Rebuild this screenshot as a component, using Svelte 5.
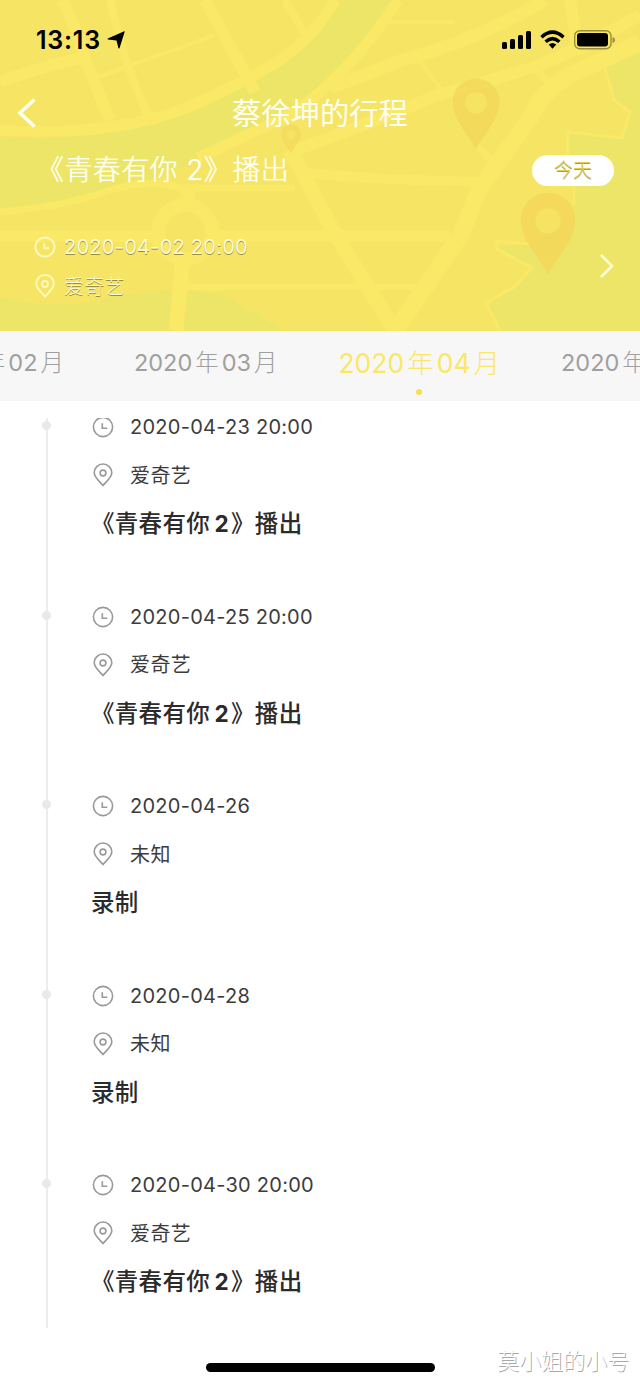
<script>
  const months = [['2020', '02'], ['2020', '03'], ['2020', '04'], ['2020', '05']];
  const episode = ['《青春有你 ', '2', '》播出'];
  const events = [
    { time: '2020-04-23 20:00', place: '爱奇艺', title: episode },
    { time: '2020-04-25 20:00', place: '爱奇艺', title: episode },
    { time: '2020-04-26', place: '未知', title: ['录制'] },
    { time: '2020-04-28', place: '未知', title: ['录制'] },
    { time: '2020-04-30 20:00', place: '爱奇艺', title: episode }
  ];
</script>

{#snippet clock()}
  <svg class="icon" viewBox="0 0 24 24"><circle cx="12" cy="12" r="9.6" /><path d="M11.3 8.2v5h5" /></svg>
{/snippet}
{#snippet pin()}
  <svg class="icon" viewBox="0 0 24 24"><path d="M12 22.500C9 19 3.200 14.500 3.200 9.800a8.800 8.800 0 0 1 17.600 0C20.800 14.500 15 19 12 22.500Z" /><circle cx="12" cy="10" r="2.900" /></svg>
{/snippet}
{#snippet marker(x, y, s, o)}
  <g transform="translate({x} {y}) scale({s})" opacity={o}>
    <path fill="#f4d85a" d="M0 57C-5 43-28 22-28 0a28 28 0 0 1 56 0C28 22 5 43 0 57Z" />
    <circle cy="1" r="13" fill="#f6e361" />
  </g>
{/snippet}

<div class="screen">
  <header>
    <svg class="map" viewBox="0 0 640 331">
      <g fill="#ece568">
        <path d="M0 137Q130 143 208 105C270 78 312 48 340 0H394C370 40 335 84 290 110C220 145 190 172 130 184Q60 205 0 208Z" />
        <path d="M0 297Q50 310 100 300Q205 278 240 305L285 331H0Z" />
        <path d="M640 44L604 65L614 100L630 112L622 138L568 132L570 160L574 220L530 243L498 247L532 268L510 290L486 305L500 331H640Z" />
      </g>
      <g class="roads">
        <path d="M0 130Q130 138 208 98C270 70 308 48 335 0" stroke-width="11" />
        <path d="M0 212Q60 207 105 192T180 188H295" stroke-width="7" />
        <path d="M198 158L290 115Q350 75 398 0" stroke-width="11" />
        <path d="M0 82Q40 67 85 57" stroke-width="12" />
        <path d="M98 77L215 35M388 22H455M415 55L447 97" stroke-width="4" />
        <path d="M62 0Q78 30 85 60L110 120M205 0L255 92" stroke-width="12" />
        <path d="M110 0Q123 62 150 120M285 0L305 35" stroke-width="8" />
        <path d="M330 88L400 61Q480 39 545 0" stroke-width="13" />
        <path d="M290 152Q380 120 435 96L535 67L590 43L640 15M570 0L578 55" stroke-width="12" />
        <path d="M640 43L570 75Q543 90 530 118L480 188L460 236L395 331" stroke-width="17" />
        <path d="M536 70L550 83M476 144L490 160" stroke-width="7" />
        <path d="M308 173Q380 180 485 182" stroke-width="10" />
        <path d="M0 236H155M215 236H450" stroke-width="12" />
        <path d="M185 287H428" stroke-width="7" />
        <path d="M290 150L335 234L395 331" stroke-width="15" />
        <path d="M188 188V210M183 255L176 331" stroke-width="15" />
        <circle cx="185" cy="232" r="27" stroke-width="14" />
        <path d="M604 65L614 100L630 112L622 138L568 132V160M574 182V205M538 245L497 241V249L532 268L514 287L486 303L500 331" stroke-width="3" />
      </g>
      {@render marker(476, 102, 0.84, 0.8)}
      {@render marker(548, 220, 0.97, 0.9)}
      {@render marker(291, 134, 0.35, 0.6)}
    </svg>

    <div class="status">
      <span class="now">13:13</span>
      <svg class="arrow" width="18" height="18" viewBox="0 0 18 18"><path d="M17.200.3Q17.800.3 17.600 1L12.600 17Q12 18 11.400 17L9.500 9.400L1 8.600Q0 8.200.8 7.500Z" /></svg>
      <svg class="signals" width="116" height="22" viewBox="0 0 116 22">
        <rect x="2" y="13" width="5" height="7" rx="1.500" /><rect x="10" y="10" width="5" height="10" rx="1.500" /><rect x="18" y="6" width="5" height="14" rx="1.500" /><rect x="26" y="2" width="5" height="18" rx="1.500" />
        <g fill="none" stroke="#000" stroke-width="3.500"><path d="M41.500 8.200Q52.500-1.800 63.500 8.200M45.600 12.700Q52.500 6.500 59.400 12.700" /></g><path d="M48.700 15.600Q52.500 12.500 56.300 15.600L52.500 19.800Z" />
        <rect x="74.700" y="1.700" width="36.300" height="18" rx="5" fill="none" stroke="#998e3c" stroke-width="1.400" /><rect x="77" y="4" width="31" height="13.500" rx="3" /><path d="M112.500 8Q115 8.500 115 11T112.500 14Z" fill="#998e3c" />
      </svg>
    </div>

    <div class="nav">
      <svg width="20" height="32" viewBox="0 0 20 32"><path d="M17.500 2.500L3 16L17.500 29.500" /></svg>
      <h1>蔡徐坤的行程</h1>
    </div>

    <div class="lead">
      <h2>《青春有你 2》播出</h2>
      <button>今天</button>
    </div>

    <div class="next">
      <div class="facts">
        <p>{@render clock()}<span class="num">2020-04-02 20:00</span></p>
        <p>{@render pin()}<span class="han">爱奇艺</span></p>
      </div>
      <svg class="go" width="17" height="26" viewBox="0 0 17 26"><path d="M3 2L14 13L3 24" /></svg>
    </div>
  </header>

  <nav class="months">
    {#each months as [y, m], i}
      <div class="month" class:active={i === 2}><span>{y}<b>年</b>{m}<b class="end">月</b></span></div>
    {/each}
  </nav>

  <main>
    <div class="line"></div>
    <ul>
      {#each events as e}
        <li>
          <i class="dot"></i>
          <div class="row">{@render clock()}<span class="num">{e.time}</span></div>
          <div class="row">{@render pin()}<span class="han">{e.place}</span></div>
          <h3>{#each e.title as part, i}<span class:digit={i === 1}>{part}</span>{/each}</h3>
        </li>
      {/each}
    </ul>
  </main>

  <footer>
    <div class="home"></div>
    <span>莫小姐的小号</span>
  </footer>
</div>

<style>
  :global(body) { background: #fff; }
  .screen { width: 640px; height: 1386px; display: flex; flex-direction: column; overflow: hidden; background: #fff; font-family: Inter, "Noto Sans CJK SC", sans-serif; color: #3c3c3c; }
  h1, h2, h3, p, ul { margin: 0; padding: 0; font-weight: 400; }
  .icon { width: 24px; height: 24px; fill: none; stroke: #999; stroke-width: 1.6; flex: none; }

  header { position: relative; height: 331px; background: #f6e464; color: #fffbd6; display: flex; flex-direction: column; flex: none; }
  .map { position: absolute; inset: 0; width: 640px; height: 331px; }
  .roads { fill: none; stroke: #f9e966; }
  .status, .nav, .lead, .next { position: relative; display: flex; align-items: center; }
  .status { height: 79px; padding: 0 24px 0 36px; color: #000; }
  .now { font-size: 25px; font-weight: 600; letter-spacing: .8px; width: 70px; white-space: nowrap; flex: none; }
  .arrow { margin-left: 1px; }
  .signals { margin-left: auto; }
  .nav { height: 68px; padding: 0 17px; }
  .nav svg { flex: none; fill: none; stroke: #fffef0; stroke-width: 3.6; }
  h1 { flex: 1; text-align: center; font-size: 29.3px; line-height: 68px; color: #fffef2; padding: 1px 20px 0 0; }
  .lead { height: 44px; margin-top: 1px; padding: 0 26px 0 36px; justify-content: space-between; }
  h2 { font-size: 28px; line-height: 44px; font-weight: 300; letter-spacing: .4px; color: #fffff4; text-shadow: 0 0 1px #fffdd0; }
  button { width: 82px; height: 31px; border: 0; border-radius: 16px; background: #fff; padding: 0; font: 300 19px/32px Inter, "Noto Sans CJK SC", sans-serif; color: #e4cc48; text-shadow: 0 1px 0 #a09a6c; }
  .next { height: 78px; margin-top: 35px; padding: 0 25px 0 33px; justify-content: space-between; }
  .facts p { display: flex; align-items: center; gap: 7px; height: 39px; font-size: 20px; text-shadow: 0 1px 0 #978d45; }
  .facts .icon { stroke: #fff8ba; stroke-width: 2; }
  .num { letter-spacing: .26px; white-space: pre; }
  .han { letter-spacing: .4px; position: relative; top: -1px; }
  .facts .han { top: 0; font-weight: 300; }
  .go { fill: none; stroke: #fffbd0; stroke-width: 2.6; }

  .months { height: 70px; flex: none; background: #f7f7f7; display: flex; color: #a0a0a0; font-size: 23.500px; margin-left: -114.500px; width: 854px; white-space: nowrap; line-height: 64px; }
  .month { width: 213.500px; flex: none; text-align: center; position: relative; }
  .month b { font-weight: 300; font-size: 1em; margin: 0 3px; }
  .month b.end { margin-right: 0; }
  .active { color: #fae766; font-size: 26.500px; }
  .active::after { content: ""; position: absolute; left: 50%; bottom: 6px; width: 6px; height: 6px; margin-left: -3px; border-radius: 50%; background: #f9df50; }

  main { position: relative; margin-top: 17px; height: 910px; overflow: hidden; flex: none; }
  .line { position: absolute; left: 46px; top: 0; width: 2px; height: 100%; background: #ececec; }
  ul { list-style: none; margin-top: -15px; }
  li { position: relative; height: 189.500px; padding-left: 91px; box-sizing: border-box; }
  .dot { position: absolute; left: 42px; top: 18px; width: 9px; height: 9px; border-radius: 50%; background: #e9e9e9; }
  .row { height: 48px; display: flex; align-items: center; gap: 15px; font-size: 20px; white-space: nowrap; }
  h3 { height: 48px; line-height: 50px; font-size: 23.500px; font-weight: 500; letter-spacing: .3px; word-spacing: -2px; color: #2b2b2b; white-space: pre; }
  .digit { font-weight: 700; font-size: 22.500px; margin-right: 2px; }

  footer { position: relative; flex: 1; display: flex; justify-content: center; padding-top: 35px; }
  .home { width: 229px; height: 9px; border-radius: 5px; background: #000; }
  footer span { position: absolute; right: 11px; bottom: 10px; font-size: 22px; line-height: 30px; font-weight: 300; color: #fff; text-shadow: 1px 1px 0 #a8a8a8; }
</style>
